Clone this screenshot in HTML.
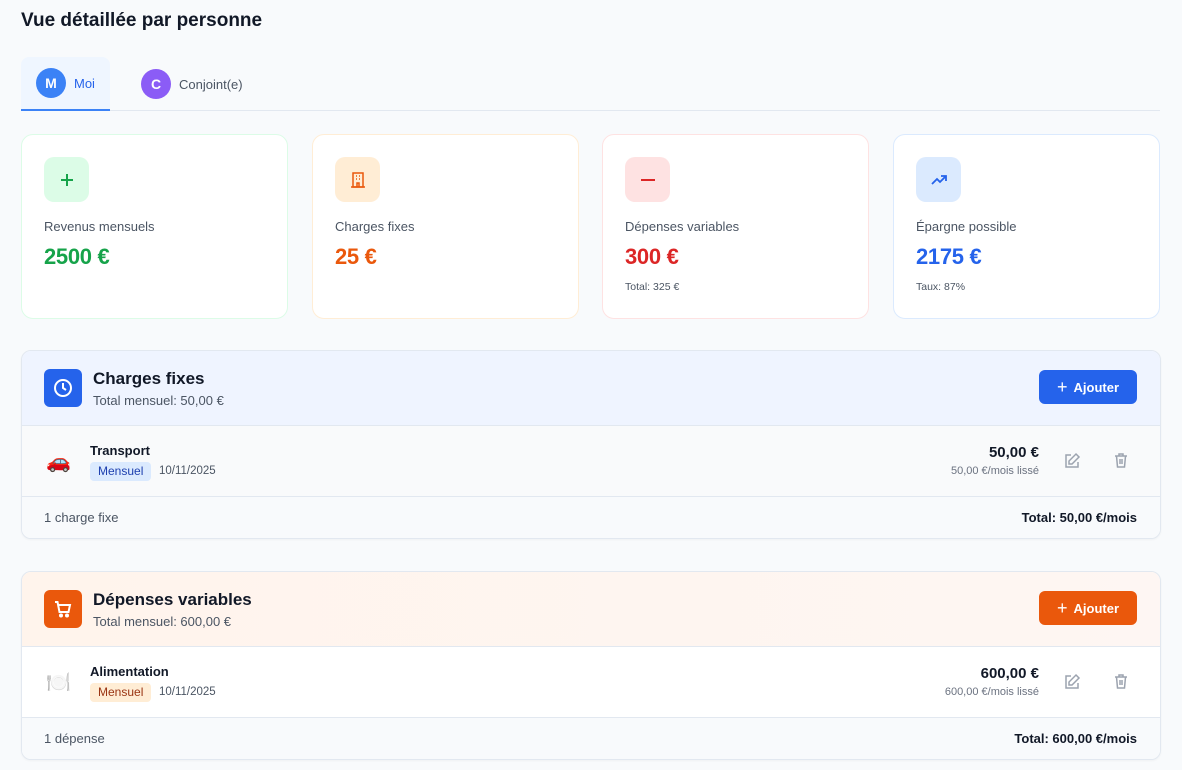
<!DOCTYPE html>
<html><head><meta charset="utf-8"><style>
*{box-sizing:border-box;margin:0;padding:0}
body{width:1182px;height:770px;overflow:hidden;background:#f8fafc;font-family:"Liberation Sans",Arial,sans-serif;color:#111827;position:relative}
h1{position:absolute;left:21px;top:10px;font-size:19px;font-weight:700;color:#111827}
.tabs{position:absolute;left:21px;top:57px;width:1139px;height:54px;border-bottom:1px solid #e2e8f0}
.tab{position:absolute;top:0;height:54px;display:flex;align-items:center;font-size:13px}
.av{width:30px;height:30px;border-radius:50%;color:#fff;font-weight:700;font-size:14px;display:flex;align-items:center;justify-content:center;margin-right:8px}
.card{position:absolute;top:134px;width:267px;height:185px;background:#fff;border-radius:12px;border:1px solid}
.ib{position:absolute;left:22px;top:22px;width:45px;height:45px;border-radius:10px;display:flex;align-items:center;justify-content:center}
.lbl{position:absolute;left:22px;top:84px;font-size:13px;color:#4b5563}
.val{position:absolute;left:22px;top:109px;font-size:22px;font-weight:700;letter-spacing:-0.3px}
.sub{position:absolute;left:22px;top:146px;font-size:10.5px;color:#4b5563}
.sec{position:absolute;left:21px;width:1140px;background:#fff;border:1px solid #e2e8f0;border-radius:10px;overflow:hidden;box-shadow:0 1px 2px rgba(0,0,0,.04)}
.hd{height:75px;position:relative;border-bottom:1px solid #e2e8f0}
.si{position:absolute;left:22px;top:18px;width:38px;height:38px;border-radius:6px;display:flex;align-items:center;justify-content:center}
.st{position:absolute;left:71px;top:18px;font-size:17px;font-weight:700}
.ss{position:absolute;left:71px;top:42px;font-size:13px;color:#4b5563}
.btn{position:absolute;left:1017px;top:19px;width:98px;height:34px;border-radius:6px;color:#fff;font-size:13px;font-weight:700;display:flex;align-items:center;justify-content:center;gap:6px}
.row{height:71px;position:relative;border-bottom:1px solid #e2e8f0}
.emo{position:absolute;left:24px;top:23px;font-size:20px}
.nm{position:absolute;left:68px;top:17px;font-size:13px;font-weight:700}
.tag{position:absolute;left:68px;top:36px;height:19px;padding:0 8px;border-radius:4px;font-size:12px;line-height:19px}
.dt{position:absolute;left:137px;top:39px;font-size:11.5px;color:#4b5563}
.amt{position:absolute;right:121px;top:18px;font-size:15px;font-weight:700;text-align:right}
.ams{position:absolute;right:121px;top:39px;font-size:11px;color:#6b7280;text-align:right}
.ed{position:absolute;left:1041px;top:26px}
.tr{position:absolute;left:1090px;top:25px}
.ft{height:41px;position:relative;background:#f8fafc}
.fl{position:absolute;left:22px;top:13px;font-size:13px;color:#4b5563}
.fr{position:absolute;right:23px;top:13px;font-size:13px;font-weight:700}
</style></head><body>
<h1>Vue détaillée par personne</h1>
<div class="tabs">
 <div class="tab" style="left:0;width:89px;background:#eff6ff;border-bottom:2px solid #3b82f6;border-radius:8px 8px 0 0;padding-left:15px;color:#2563eb"><div class="av" style="background:#3b82f6">M</div>Moi</div>
 <div class="tab" style="left:120px;color:#4b5563"><div class="av" style="background:#8b5cf6">C</div>Conjoint(e)</div>
</div>

<div class="card" style="left:21px;border-color:#dcfce7">
 <div class="ib" style="background:#dcfce7"><svg width="16" height="16" viewBox="0 0 16 16"><path d="M8 2v12M2 8h12" stroke="#16a34a" stroke-width="2"/></svg></div>
 <div class="lbl">Revenus mensuels</div><div class="val" style="color:#16a34a">2500 €</div>
</div>
<div class="card" style="left:312px;border-color:#ffedd5">
 <div class="ib" style="background:#ffedd5"><svg width="18" height="18" viewBox="0 0 18 18" fill="none" stroke="#ea580c" stroke-width="1.5"><rect x="4" y="2" width="10" height="14"/><path d="M2 16h14M7 5h1M10 5h1M7 8h1M10 8h1M8 16v-4h2v4"/></svg></div>
 <div class="lbl">Charges fixes</div><div class="val" style="color:#ea580c">25 €</div>
</div>
<div class="card" style="left:602px;border-color:#fee2e2">
 <div class="ib" style="background:#fee2e2"><svg width="16" height="16"><path d="M1 8h14" stroke="#dc2626" stroke-width="2"/></svg></div>
 <div class="lbl">Dépenses variables</div><div class="val" style="color:#dc2626">300 €</div><div class="sub">Total: 325 €</div>
</div>
<div class="card" style="left:893px;border-color:#dbeafe">
 <div class="ib" style="background:#dbeafe"><svg width="18" height="18" viewBox="0 0 18 18" fill="none" stroke="#2563eb" stroke-width="1.8"><path d="M2 13l5-5 3 3 6-6M11 5h5v5"/></svg></div>
 <div class="lbl">Épargne possible</div><div class="val" style="color:#2563eb">2175 €</div><div class="sub">Taux: 87%</div>
</div>

<div class="sec" style="top:350px">
 <div class="hd" style="background:#eff4ff">
  <div class="si" style="background:#2563eb"><svg width="20" height="20" viewBox="0 0 20 20" fill="none" stroke="#fff" stroke-width="2"><circle cx="10" cy="10" r="8"/><path d="M10 5v5l3 2"/></svg></div>
  <div class="st">Charges fixes</div><div class="ss">Total mensuel: 50,00 €</div>
  <div class="btn" style="background:#2563eb"><span style="font-size:18px;font-weight:400">+</span>Ajouter</div>
 </div>
 <div class="row" style="background:#f9fafb">
  <div class="emo">🚗</div><div class="nm">Transport</div>
  <div class="tag" style="background:#dbeafe;color:#1e40af">Mensuel</div><div class="dt">10/11/2025</div>
  <div class="amt">50,00 €</div><div class="ams">50,00 €/mois lissé</div>
  <svg class="ed" width="18" height="18" viewBox="0 0 18 18" fill="none" stroke="#9ca3af" stroke-width="1.5"><path d="M8 3H3v12h12v-5M13 2l3 3-7 7H6V9z"/></svg>
  <svg class="tr" width="18" height="18" viewBox="0 0 18 18" fill="none" stroke="#9ca3af" stroke-width="1.5"><path d="M3 5h12M7 5V3h4v2M4.5 5l1 11h7l1-11M8 8v5M10 8v5"/></svg>
 </div>
 <div class="ft"><div class="fl">1 charge fixe</div><div class="fr">Total: 50,00 €/mois</div></div>
</div>

<div class="sec" style="top:571px">
 <div class="hd" style="background:linear-gradient(90deg,#fff4ec,#fef6f3)">
  <div class="si" style="background:#ea580c"><svg width="20" height="20" viewBox="0 0 20 20" fill="none" stroke="#fff" stroke-width="2"><path d="M2 3h2.5l2 10h9l1.5-7H5.5"/><circle cx="8" cy="16.5" r="1"/><circle cx="14" cy="16.5" r="1"/></svg></div>
  <div class="st">Dépenses variables</div><div class="ss">Total mensuel: 600,00 €</div>
  <div class="btn" style="background:#ea580c"><span style="font-size:18px;font-weight:400">+</span>Ajouter</div>
 </div>
 <div class="row" style="background:#fff">
  <div class="emo">🍽️</div><div class="nm">Alimentation</div>
  <div class="tag" style="background:#ffedd5;color:#9a3412">Mensuel</div><div class="dt">10/11/2025</div>
  <div class="amt">600,00 €</div><div class="ams">600,00 €/mois lissé</div>
  <svg class="ed" width="18" height="18" viewBox="0 0 18 18" fill="none" stroke="#9ca3af" stroke-width="1.5"><path d="M8 3H3v12h12v-5M13 2l3 3-7 7H6V9z"/></svg>
  <svg class="tr" width="18" height="18" viewBox="0 0 18 18" fill="none" stroke="#9ca3af" stroke-width="1.5"><path d="M3 5h12M7 5V3h4v2M4.5 5l1 11h7l1-11M8 8v5M10 8v5"/></svg>
 </div>
 <div class="ft"><div class="fl">1 dépense</div><div class="fr">Total: 600,00 €/mois</div></div>
</div>
</body></html>
